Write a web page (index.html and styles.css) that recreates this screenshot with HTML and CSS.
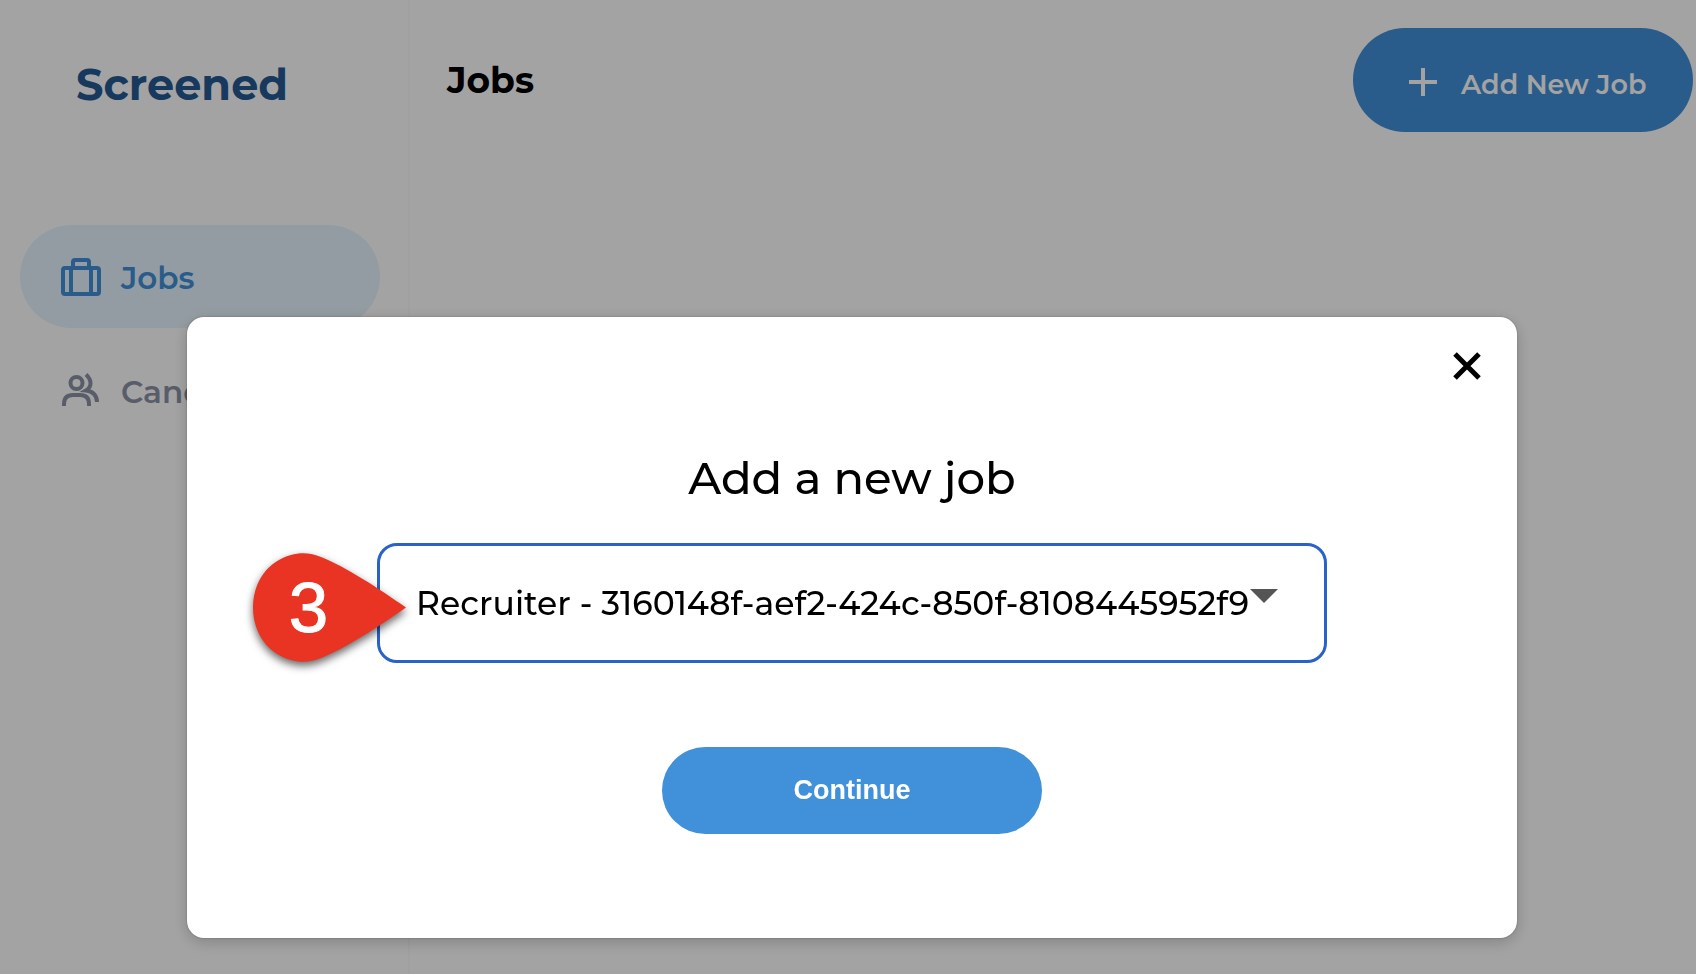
FILE: index.html
```
<!DOCTYPE html>
<html lang="en">
<head>
<meta charset="utf-8">
<meta name="viewport" content="width=device-width, initial-scale=1">
<title>Screened - Jobs</title>
<link rel="stylesheet" href="styles.css">
</head>
<body>
<div class="app">
  <aside class="sidebar">
    <div class="logo">Screened</div>
    <nav class="nav">
      <a class="nav-item nav-item-active" href="#jobs">
        <svg class="nav-icon" viewBox="0 0 40 40" fill="none" stroke="currentColor" stroke-width="4" stroke-linejoin="round" aria-hidden="true">
          <rect x="2" y="10" width="36" height="26" rx="2"/>
          <path d="M12 10V4q0-2 2-2h12q2 0 2 2v6M10 10v26M30 10v26"/>
        </svg>
        <span>Jobs</span>
      </a>
      <a class="nav-item" href="#candidates">
        <svg class="nav-icon" viewBox="0 0 40 40" fill="none" stroke="currentColor" stroke-width="4" aria-hidden="true">
          <circle cx="15.500" cy="11" r="6"/>
          <path d="M3 34v-2q0-9 9-9h7q9 0 9 9v2"/>
          <path d="M25 2.500C31 8 31 15 25 18.500C32 19 36 24 36 30"/>
        </svg>
        <span>Candidates</span>
      </a>
    </nav>
  </aside>
  <main class="main">
    <header class="header">
      <h1 class="page-title">Jobs</h1>
      <button class="add-button" type="button">
        <svg class="plus-icon" viewBox="0 0 28 32" fill="none" stroke="currentColor" stroke-width="4" aria-hidden="true"><path d="M14 0v28M0 14h28"/></svg>
        <span>Add New Job</span>
      </button>
    </header>
  </main>
</div>

<div class="overlay">
  <section class="modal" role="dialog" aria-modal="true" aria-labelledby="modal-title">
    <button class="close-button" type="button" aria-label="Close">
      <svg class="close-icon" viewBox="0 0 28 28" stroke="currentColor" stroke-width="5" aria-hidden="true"><path d="M2 2l24 24M26 2L2 26"/></svg>
    </button>
    <form class="job-form">
      <label class="modal-title" id="modal-title" for="job">Add a new job</label>
      <div class="select-wrap">
        <select class="job-select" id="job">
          <option>Recruiter - 3160148f-aef2-424c-850f-8108445952f9</option>
        </select>
        <svg class="select-arrow" viewBox="0 0 28 14" aria-hidden="true"><path d="M0 0h28L14 14z" fill="#555"/></svg>
        <div class="marker">
          <svg class="marker-shape" viewBox="0 0 153 109" aria-hidden="true"><path d="M153 54.500C125 35 93 14 68 4C59 0 48-1 38 2C15 8 0 29 0 54.500C0 80 15 101 38 107C48 110 59 109 68 105C93 95 125 74 153 54.500Z" fill="#e93323"/></svg>
          <span class="marker-number">3</span>
        </div>
      </div>
      <button class="continue-button" type="button">Continue</button>
    </form>
  </section>
</div>
</body>
</html>
```
FILE: styles.css
```
* {
  box-sizing: border-box;
}

body {
  margin: 0;
  background: #fff;
  color: #000;
  font-family: Montserrat, Inter, sans-serif;
}

button,
select {
  margin: 0;
  font-family: inherit;
  cursor: pointer;
}

svg {
  display: block;
  flex: none;
}

.app {
  display: flex;
  min-height: 100vh;
}

.sidebar {
  flex: none;
  width: 410px;
  padding: 57px 28px 0 20px;
  border-right: 2px solid #fafafa;
}

.logo {
  padding-left: 56px;
  color: #265a94;
  font-size: 43px;
  font-weight: 700;
  line-height: 56px;
}

.nav {
  display: flex;
  flex-direction: column;
  gap: 11px;
  margin-top: 112px;
}

.nav-item {
  display: flex;
  align-items: center;
  gap: 20px;
  height: 103px;
  padding: 2px 40px 0 41px;
  border-radius: 52px;
  color: #8b92a6;
  font-size: 31px;
  font-weight: 600;
  text-decoration: none;
}

.nav-item-active {
  background: #e7f5fd;
  color: #4090da;
}

.nav-icon {
  width: 40px;
  height: 40px;
}

.main {
  flex: 1;
}

.header {
  display: flex;
  align-items: center;
  justify-content: space-between;
  padding: 28px 3px 0 37px;
}

.page-title {
  margin: 0;
  font-size: 36px;
  font-weight: 700;
}

.add-button {
  display: flex;
  align-items: center;
  gap: 24px;
  width: 340px;
  height: 104px;
  padding: 8px 0 0 56px;
  border: 0;
  border-radius: 52px;
  background: #4090da;
  color: #fff;
  font-size: 27px;
  font-weight: 600;
}

.plus-icon {
  width: 28px;
  height: 32px;
}

.overlay {
  position: fixed;
  inset: 0;
  display: flex;
  padding: 317px 179px 36px 187px;
  background: rgba(0, 0, 0, 0.36);
}

.modal {
  position: relative;
  flex: 1;
  padding: 129px 32px 0;
  border-radius: 17px;
  background: #fff;
  box-shadow: 0 4px 16px rgba(0, 0, 0, 0.2), 0 0 2px rgba(0, 0, 0, 0.3);
}

.close-button {
  position: absolute;
  top: 25px;
  right: 26px;
  padding: 10px;
  border: 0;
  background: none;
  color: #000;
}

.close-icon {
  width: 28px;
  height: 28px;
}

.job-form {
  display: flex;
  flex-direction: column;
  align-items: center;
}

.modal-title {
  font-size: 45px;
  font-weight: 500;
  line-height: 64px;
}

.select-wrap {
  position: relative;
  width: 100%;
  max-width: 950px;
  margin-top: 33px;
}

.job-select {
  display: block;
  width: 100%;
  height: 120px;
  padding: 0 36px;
  border: 3px solid #2962c9;
  border-radius: 20px;
  outline: 0;
  appearance: none;
  background: #fff;
  color: #000;
  font-size: 33px;
  font-weight: 500;
}

.select-arrow {
  position: absolute;
  top: 46px;
  right: 49px;
  width: 28px;
  height: 14px;
  pointer-events: none;
}

.marker {
  position: absolute;
  top: 10px;
  left: -124px;
  width: 153px;
  height: 109px;
}

.marker-shape {
  width: 153px;
  height: 109px;
  overflow: visible;
  filter: drop-shadow(0 4px 4px rgba(0, 0, 0, 0.6));
}

.marker-number {
  position: absolute;
  inset: 0 42px 0 0;
  color: #fff;
  font-family: "Liberation Sans", Arial, sans-serif;
  font-size: 71px;
  line-height: 109px;
  text-align: center;
  -webkit-text-stroke: 1px #fff;
}

.continue-button {
  width: 380px;
  height: 87px;
  margin-top: 84px;
  border: 0;
  border-radius: 44px;
  background: #4090da;
  color: #fff;
  font-family: "Liberation Sans", Arial, sans-serif;
  font-size: 27px;
  font-weight: 700;
}
```
